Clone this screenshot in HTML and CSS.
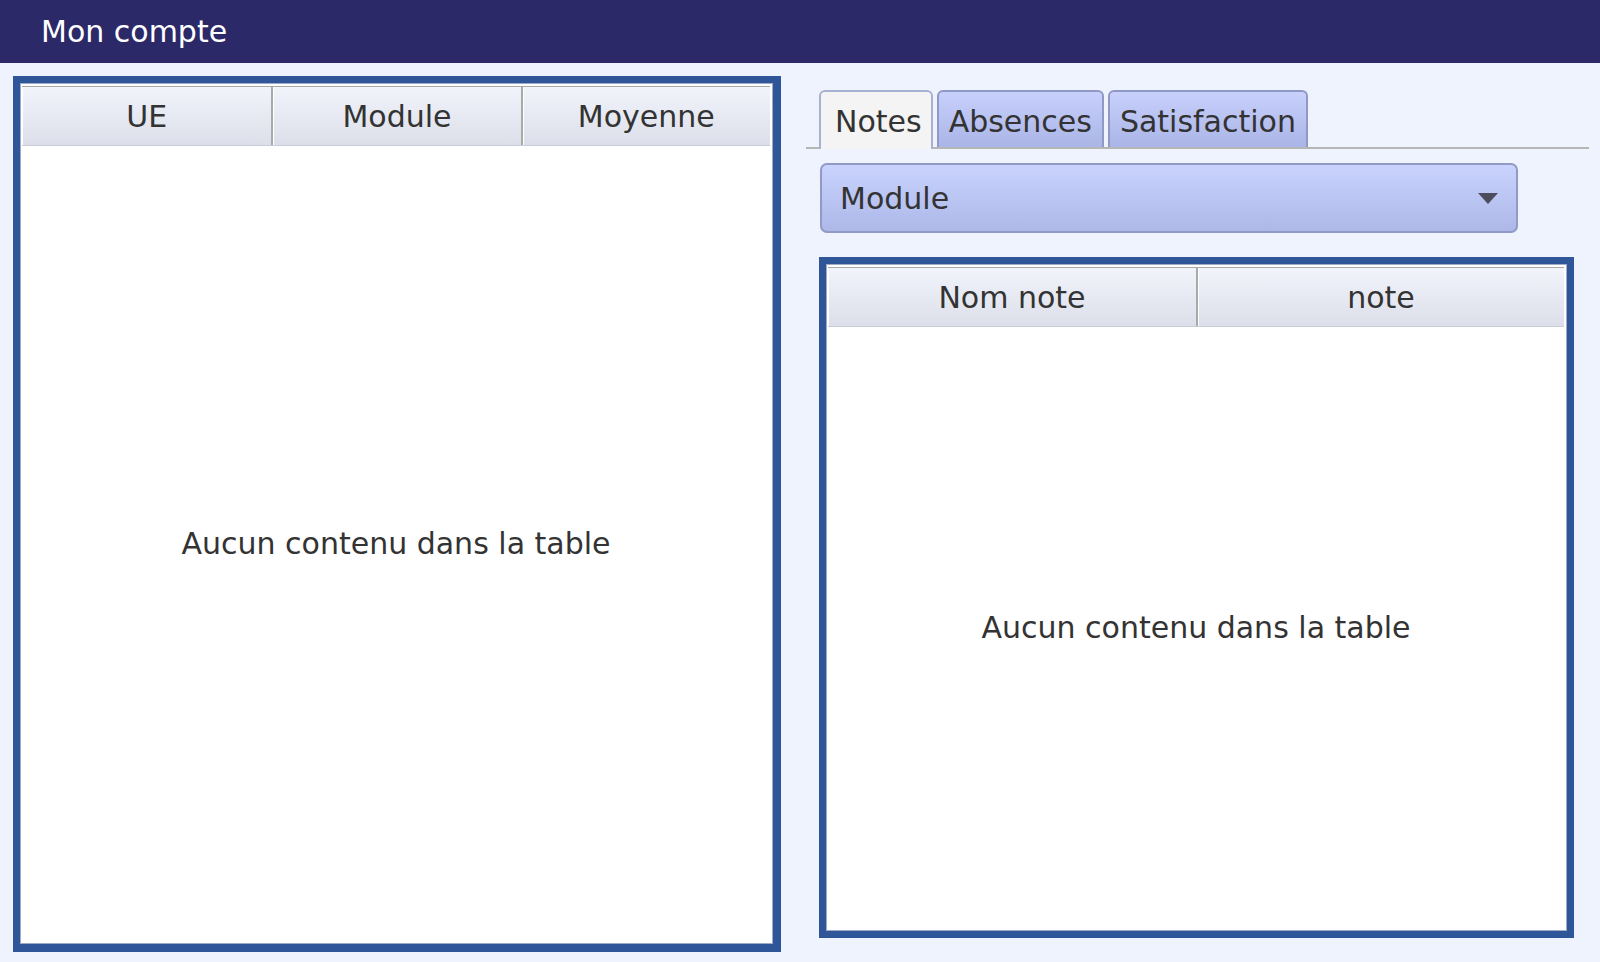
FILE: index.html
```html
<!DOCTYPE html>
<html lang="fr">
<head>
<meta charset="utf-8">
<title>Mon compte</title>
<link rel="stylesheet" href="styles.css">
</head>
<body>
<div class="topbar">Mon compte</div>
<div class="main">
  <div class="panel panel-left">
    <div class="table">
      <div class="thead cols3">
        <div class="th">UE</div>
        <div class="th">Module</div>
        <div class="th">Moyenne</div>
      </div>
      <div class="tbody">Aucun contenu dans la table</div>
    </div>
  </div>
  <div class="right">
    <div class="tabbar">
      <div class="tab selected">Notes</div>
      <div class="tab">Absences</div>
      <div class="tab">Satisfaction</div>
    </div>
    <div class="combo">
      <span class="combo-label">Module</span>
      <span class="arrow"></span>
    </div>
    <div class="panel panel-right">
      <div class="table">
        <div class="thead cols2">
          <div class="th">Nom note</div>
          <div class="th">note</div>
        </div>
        <div class="tbody">Aucun contenu dans la table</div>
      </div>
    </div>
  </div>
</div>
</body>
</html>
```

FILE: styles.css
```css
html, body {
  margin: 0;
  padding: 0;
}
body {
  width: 1600px;
  height: 962px;
  overflow: hidden;
  background: #eef3fd;
  font-family: "DejaVu Sans", Verdana, sans-serif;
  font-size: 30px;
  color: #333333;
}
.topbar {
  height: 63px;
  box-sizing: border-box;
  background: #2b2968;
  color: #ffffff;
  display: flex;
  align-items: center;
  padding-left: 41px;
}
.main {
  display: flex;
  padding: 13px 0 0 13px;
  gap: 25px;
}
.panel {
  box-sizing: border-box;
  border: 7px solid #2f5699;
  background: #ffffff;
}
.panel-left {
  width: 768px;
  height: 876px;
  border-right-width: 8px;
  border-bottom-width: 8px;
}
.table {
  box-sizing: border-box;
  height: 100%;
  border: 1px solid #9eabc4;
  padding: 2px 2px 0 1px;
  display: flex;
  flex-direction: column;
}
.thead {
  display: grid;
  height: 60px;
  box-sizing: border-box;
  border-top: 1px solid #a8a8a8;
  border-bottom: 1px solid #c9cdd8;
  background: linear-gradient(#f2f4fc, #dcdfe9);
}
.cols3 { grid-template-columns: 1fr 1fr 1fr; }
.cols2 { grid-template-columns: 1fr 1fr; }
.th {
  display: flex;
  align-items: center;
  justify-content: center;
  box-shadow: inset 1px 0 0 #ffffff;
}
.th + .th {
  border-left: 2px solid #a9a9a9;
}
.tbody {
  flex: 1;
  display: flex;
  align-items: center;
  justify-content: center;
  padding-bottom: 2px;
}
.right {
  width: 783px;
  display: flex;
  flex-direction: column;
}
.tabbar {
  margin-top: 14px;
  height: 57px;
  border-bottom: 2px solid #b6b6b6;
  display: flex;
  align-items: flex-end;
  gap: 4px;
  padding-left: 13px;
}
.tab {
  box-sizing: border-box;
  height: 57px;
  padding: 4px 10px 0 10px;
  display: flex;
  align-items: center;
  border: 2px solid #8f99c6;
  border-bottom: none;
  border-radius: 6px 6px 0 0;
  background: linear-gradient(#c8d0fb, #aab5e7);
}
.tab.selected {
  background: #f4f4f4;
  border-color: #a9b1d3;
  height: 59px;
  margin-bottom: -2px;
  padding: 2px 9px 0 14px;
}
.combo {
  box-sizing: border-box;
  margin: 14px 0 0 14px;
  width: 698px;
  height: 70px;
  border: 2px solid #8f9ac6;
  border-radius: 7px;
  background: linear-gradient(#c9d3fd, #adb8e9);
  display: flex;
  align-items: center;
  justify-content: space-between;
  padding: 0 18px 0 18px;
}
.arrow {
  width: 0;
  height: 0;
  border-left: 10px solid transparent;
  border-right: 10px solid transparent;
  border-top: 11px solid #4b4c5c;
}
.panel-right {
  margin: 24px 0 0 13px;
  width: 755px;
  height: 681px;
}
```
